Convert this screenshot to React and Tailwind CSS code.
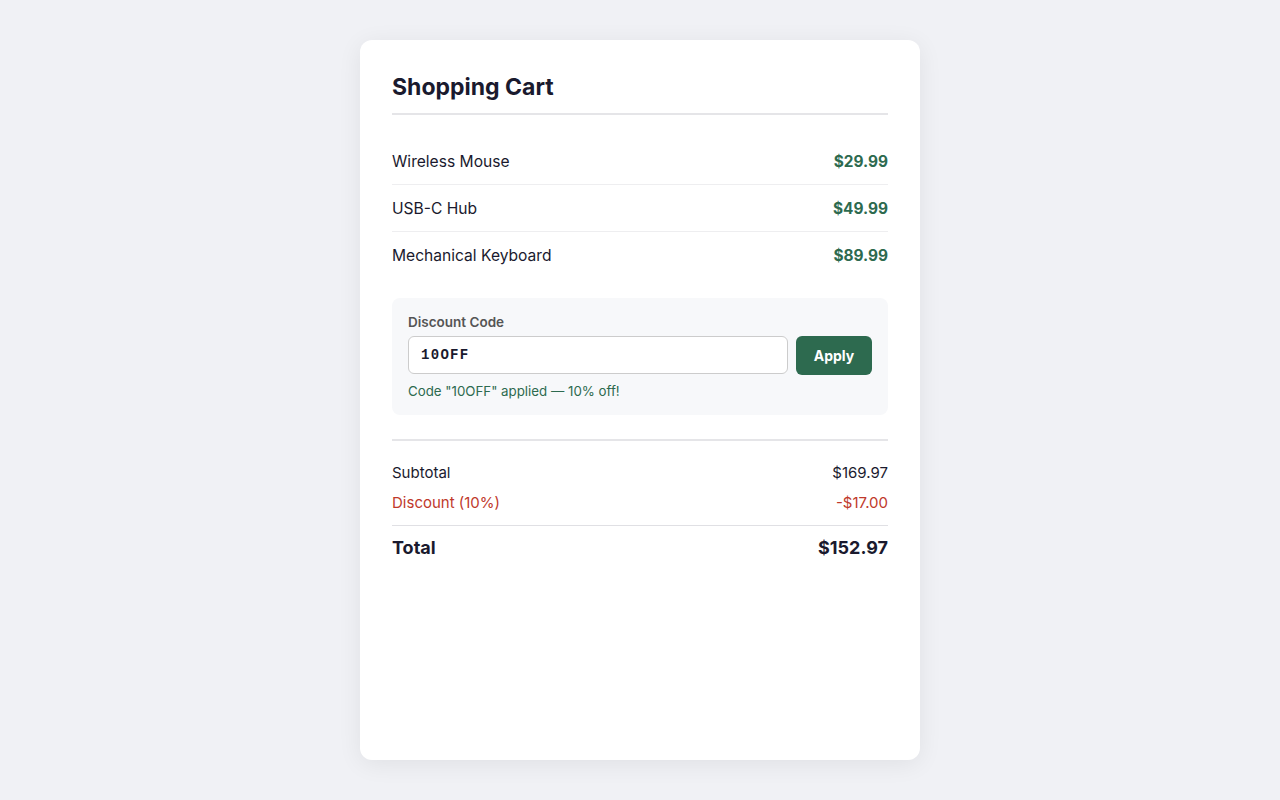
const items = [
  { name: "Wireless Mouse", price: "$29.99" },
  { name: "USB-C Hub", price: "$49.99" },
  { name: "Mechanical Keyboard", price: "$89.99" },
];

export default function App() {
  return (
    <div className="min-h-screen w-full bg-[#f0f1f5] flex justify-center pt-10 font-['Inter',sans-serif] text-[#1a1a2e]">
      <div className="w-[560px] h-[720px] bg-white rounded-xl shadow-[0_4px_24px_rgba(0,0,0,0.07)] px-8 pt-8">
        <div className="text-[23px] leading-[30px] font-bold pb-[11px] border-b-2 border-[#e5e5e8]">
          Shopping Cart
        </div>

        <div className="mt-[23px]">
          {items.map((item, i) => (
            <div
              key={item.name}
              className={
                "flex justify-between items-center pt-[15px] pb-[13px] text-[15.6px] leading-[18px] " +
                (i < items.length - 1 ? "border-b border-[#eeeef0]" : "")
              }
            >
              <span className="font-normal">{item.name}</span>
              <span className="font-bold text-[15.4px] text-[#2d6a4f]">{item.price}</span>
            </div>
          ))}
        </div>

        <div className="mt-5 bg-[#f7f8fa] rounded-lg p-4">
          <div className="text-[13.5px] leading-4 font-semibold text-[#555] mb-1.5">Discount Code</div>
          <div className="flex gap-2">
            <input
              readOnly
              value="10OFF"
              className="flex-1 h-[38px] bg-white border border-[#cccccc] rounded-md px-3 font-['Liberation_Mono',monospace] font-bold text-[14px] tracking-[1.3px] text-[#1a1a2e] outline-none"
            />
            <button className="w-[76px] h-[39px] bg-[#2d6a4f] text-white font-bold text-sm rounded-md">
              Apply
            </button>
          </div>
          <div className="mt-2 text-[13.3px] leading-4 text-[#2d6a4f]">
            Code "10OFF" applied — 10% off!
          </div>
        </div>

        <div className="mt-[24px] border-t-2 border-[#e5e5e8] pt-[17px]">
          <div className="flex justify-between py-[5px] text-[15px] leading-5">
            <span>Subtotal</span>
            <span>$169.97</span>
          </div>
          <div className="flex justify-between py-[5px] text-[15px] leading-5 text-[#c0392b]">
            <span>Discount (10%)</span>
            <span>-$17.00</span>
          </div>
          <div className="mt-[7px] border-t border-[#e0e0e4] pt-[10px] flex justify-between text-lg leading-6 font-bold">
            <span>Total</span>
            <span>$152.97</span>
          </div>
        </div>
      </div>
    </div>
  );
}
